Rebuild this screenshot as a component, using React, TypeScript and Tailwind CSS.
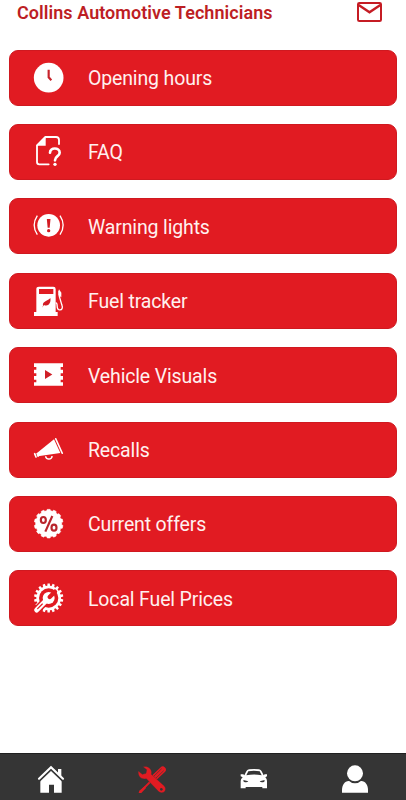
import React from 'react';

// Points of a toothed ring, two radii per tooth
function toothed(cx: number, cy: number, outer: number, inner: number, teeth: number) {
  const points: string[] = [];
  const step = (Math.PI * 2) / teeth;
  for (let i = 0; i < teeth; i++) {
    [
      [outer, -0.22],
      [outer, 0.22],
      [inner, 0.32],
      [inner, 0.68],
    ].forEach(([r, offset]) => {
      const a = (i + offset) * step - Math.PI / 2;
      points.push(`${(cx + r * Math.cos(a)).toFixed(2)},${(cy + r * Math.sin(a)).toFixed(2)}`);
    });
  }
  return points.join(' ');
}

function MenuIcon({ children }: { children: React.ReactNode }) {
  return (
    <svg viewBox="0 0 150 150" className="h-[50px] w-[50px] shrink-0" fill="none" aria-hidden="true">
      {children}
    </svg>
  );
}

const ClockIcon = () => (
  <MenuIcon>
    <circle cx="71" cy="74" r="44.5" fill="#fff" />
    <path d="M71 50V73L79 82" stroke="#c8232b" strokeWidth="6.5" />
  </MenuIcon>
);

const FaqIcon = () => (
  <MenuIcon>
    <path
      d="M61 30H93Q102 30 102 39V51M61 30L36 55V105Q36 112 43 112H71"
      stroke="#fff"
      strokeWidth="5.5"
      strokeLinecap="round"
    />
    <path d="M62 28V56H34Z" fill="#fff" />
    <path
      d="M75 77C75 60 104 61 104 77C104 88 90 87 90 100"
      stroke="#fff"
      strokeWidth="8"
      strokeLinecap="round"
    />
    <circle cx="90" cy="112" r="5" fill="#fff" />
  </MenuIcon>
);

const WarningIcon = () => (
  <MenuIcon>
    <circle cx="71" cy="73" r="34" fill="#fff" />
    <path d="M65.5 54H76.5L74 80H68Z" fill="#d31b23" />
    <circle cx="71" cy="89" r="5" fill="#d31b23" />
    <path d="M37 44Q18 73 37 101M105 44Q124 73 105 101" stroke="#fff" strokeWidth="4" />
  </MenuIcon>
);

const FuelIcon = () => (
  <MenuIcon>
    <path
      fillRule="evenodd"
      d="M42 32H85Q92 32 92 39V108H98V120H27V108H34V39Q34 32 42 32ZM42 39V54H85V39Z"
      fill="#fff"
    />
    <path d="M54 89C52 75 66 77 76 66C79 81 69 93 57 87L51 95Z" fill="#d31b23" />
    <path d="M92 80C101 82 92 98 101 101C112 104 114 95 110 85L103 61V46" stroke="#fff" strokeWidth="4" />
    <path d="M102 40L109 50V64L100 58V46Z" fill="#fff" />
  </MenuIcon>
);

const FilmIcon = () => (
  <MenuIcon>
    <path
      d="M27 40H114V51H107V59H114V70H107V78H114V89H107V97H114V107H27V97H34V89H27V78H34V70H27V59H34V51H27Z"
      fill="#fff"
    />
    <path d="M60 60L82 73.5L60 87Z" fill="#cf1f27" />
  </MenuIcon>
);

const MegaphoneIcon = () => (
  <MenuIcon>
    <path d="M36 84L87 43L106 84L39 94Z" fill="#fff" />
    <path d="M29 86L33 96" stroke="#fff" strokeWidth="5" strokeLinecap="round" />
    <path d="M36 84L40 95" stroke="#fff" strokeWidth="5" />
    <path d="M92 41L112 85" stroke="#fff" strokeWidth="4.5" strokeLinecap="round" />
    <path d="M62 94C62 105 82 105 81 93" stroke="#fff" strokeWidth="4.5" />
  </MenuIcon>
);

const OffersIcon = () => (
  <MenuIcon>
    <polygon
      points={toothed(71, 74, 43, 39, 14)}
      fill="#fff"
      stroke="#fff"
      strokeWidth="2"
      strokeLinejoin="round"
    />
    <g stroke="#b9252c" strokeWidth="6.5">
      <ellipse cx="55" cy="63" rx="7.5" ry="9" />
      <ellipse cx="87" cy="86" rx="7.5" ry="9" />
      <path d="M82 51L61 98" />
    </g>
  </MenuIcon>
);

const GearIcon = () => (
  <MenuIcon>
    <polygon points={toothed(71, 75, 44, 37, 18)} fill="#fff" />
    <circle cx="71" cy="75" r="29" fill="#e11b22" />
    <path d="M35 111L67 79" stroke="#e11b22" strokeWidth="24" strokeLinecap="round" />
    <circle cx="71" cy="75" r="18" fill="#fff" />
    <path d="M35 111L67 79" stroke="#fff" strokeWidth="15" strokeLinecap="round" />
    <path d="M74 72L90 56" stroke="#e11b22" strokeWidth="13" strokeLinecap="round" />
    <path d="M38 107L52 93" stroke="#e11b22" strokeWidth="3.5" strokeLinecap="round" />
  </MenuIcon>
);

const menuItems = [
  { label: 'Opening hours', icon: ClockIcon },
  { label: 'FAQ', icon: FaqIcon },
  { label: 'Warning lights', icon: WarningIcon },
  { label: 'Fuel tracker', icon: FuelIcon },
  { label: 'Vehicle Visuals', icon: FilmIcon },
  { label: 'Recalls', icon: MegaphoneIcon },
  { label: 'Current offers', icon: OffersIcon },
  { label: 'Local Fuel Prices', icon: GearIcon },
];

const HomeIcon = () => (
  <svg viewBox="0 0 90 90" className="h-[30px] w-[30px]" fill="none">
    <path d="M13 43L45 14L77 43V83H54V59H39V83H13Z" fill="#fff" />
    <path d="M66 12H76V38L66 29Z" fill="#fff" />
    <path d="M9 46L45 12L81 46" stroke="#353535" strokeWidth="9" />
    <path d="M9 41L45 7L81 41" stroke="#fff" strokeWidth="6.5" strokeLinecap="round" />
  </svg>
);

const ToolsIcon = () => (
  <svg viewBox="0 0 90 90" className="h-[30px] w-[30px]" fill="none">
    <path d="M77 14L53 37" stroke="#e11b22" strokeWidth="19" strokeLinecap="round" />
    <path d="M74 11L50 34M80 17L56 40" stroke="#353535" strokeWidth="1.8" />
    <path d="M50 40L17 73" stroke="#e11b22" strokeWidth="6" />
    <path d="M23 64L27 69L13 84L5 84L7 77Z" fill="#e11b22" />
    <path
      d="M18 5L29 14L27 25L16 28L4 18C1 34 14 45 28 41L64 79C77 91 93 76 82 63L43 28C47 13 34 1 18 5Z"
      fill="#e11b22"
      stroke="#353535"
      strokeWidth="1"
    />
    <circle cx="73" cy="73" r="4" fill="#353535" />
  </svg>
);

const CarIcon = () => (
  <svg viewBox="0 0 90 90" className="h-[30px] w-[30px]" fill="none">
    <path
      fillRule="evenodd"
      d="M22 19Q24 14 30 13Q45 11 60 13Q66 14 68 19L74 31L77 28H84V34L79 37Q84 42 84 48V70H70V66H20V70H5V48Q5 42 11 37L5 34V28H13L16 31ZM28 19L22 31Q45 26 68 31L62 19Q45 16 28 19Z"
      fill="#fff"
    />
    <path d="M13 45L28 49Q23 54 14 50ZM77 45L62 49Q67 54 76 50Z" fill="#353535" />
  </svg>
);

const PersonIcon = () => (
  <svg viewBox="0 0 90 90" className="h-[30px] w-[30px]" fill="none">
    <path d="M6 83V75C6 60 14 48 26 48H64C76 48 84 60 84 75V83Z" fill="#fff" />
    <circle cx="45" cy="27" r="28" fill="#353535" />
    <circle cx="45" cy="25" r="24" fill="#fff" />
  </svg>
);

const tabs = [
  { name: 'Home', icon: HomeIcon },
  { name: 'Services', icon: ToolsIcon },
  { name: 'Vehicle', icon: CarIcon },
  { name: 'Account', icon: PersonIcon },
];

export default function App() {
  return (
    <div className="flex h-[800px] w-[406px] flex-col overflow-hidden bg-white font-['Roboto',sans-serif]">
      {/* Header */}
      <header className="flex h-[49.6px] shrink-0 items-start justify-between pl-[17px] pr-6">
        <h1 className="whitespace-nowrap text-[18px] font-semibold leading-[25px] tracking-[0.05px] text-[#bd1e24]">
          Collins Automotive Technicians
        </h1>
        <button aria-label="Messages" className="mt-[2px]">
          <svg viewBox="0 0 75 60" className="h-5 w-[25px]" fill="none">
            <rect x="3" y="3" width="69" height="54" rx="4" stroke="#c51c24" strokeWidth="6" />
            <path d="M5 9L37.5 31L70 9" stroke="#c51c24" strokeWidth="7" />
          </svg>
        </button>
      </header>

      {/* Menu */}
      <main className="flex flex-1 flex-col gap-[18.4px] px-[9px]">
        {menuItems.map(({ label, icon: Icon }) => (
          <button
            key={label}
            className="flex h-14 shrink-0 items-center gap-[13px] rounded-[9px] border border-[#cf1920] bg-[#e11b22] pl-[15px] text-left"
          >
            <Icon />
            <span className="pt-[3px] text-[19.5px] leading-6 tracking-[-0.15px] text-[#fff0ef]">{label}</span>
          </button>
        ))}
      </main>

      {/* Bottom navigation */}
      <nav className="grid h-[47px] shrink-0 grid-cols-4 border-t border-[#202020] bg-[#353535]">
        {tabs.map(({ name, icon: Icon }) => (
          <button key={name} aria-label={name} className="flex items-start justify-center pt-[11px]">
            <Icon />
          </button>
        ))}
      </nav>
    </div>
  );
}
